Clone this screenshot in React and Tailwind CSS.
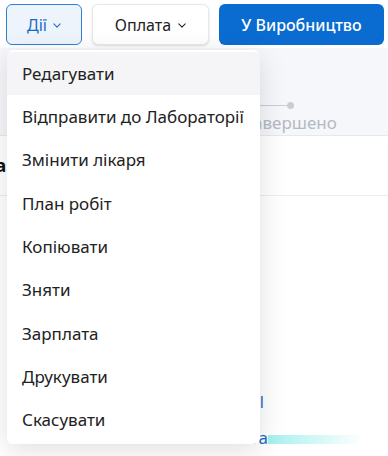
import React from 'react';

const font = { fontFamily: '"Noto Sans", "Liberation Sans", sans-serif' };

const Chevron = ({ className }) => (
  <svg viewBox="0 0 10 6" className={className} fill="none" stroke="currentColor" strokeWidth="1.3" strokeLinecap="round" strokeLinejoin="round">
    <path d="M1 1l4 4 4-4" />
  </svg>
);

const items = [
  'Редагувати',
  'Відправити до Лабораторії',
  'Змінити лікаря',
  'План робіт',
  'Копіювати',
  'Зняти',
  'Зарплата',
  'Друкувати',
  'Скасувати',
];

const App = () => {
  return (
    <div className="relative w-[388px] h-[456px] overflow-hidden bg-white" style={font}>
      {/* toolbar */}
      <div className="flex gap-[10px] pl-[6px] pt-[4px] h-[48px]">
        <button className="flex items-center justify-center gap-[6px] w-[76px] h-[41px] rounded-md border border-[#2f7fd4] bg-[#eef4fc] text-[#1a6bc4] text-[16px]">
          Дії
          <Chevron className="w-[8px] h-[5px] mt-[2px]" />
        </button>
        <button className="flex items-center justify-center gap-[7px] w-[117px] h-[41px] rounded-md border border-[#e6e8ec] bg-white text-[#222] text-[16px] shadow-sm">
          Оплата
          <Chevron className="w-[8px] h-[5px] mt-[2px]" />
        </button>
        <button className="flex items-center justify-center w-[165px] h-[41px] rounded-md bg-[#0a6cd0] text-white text-[16px] font-medium">
          У Виробництво
        </button>
      </div>

      {/* stepper strip */}
      <div className="h-[88px] bg-[#f5f7fb] border-b border-[#e6e8ec] flex justify-end">
        <div className="flex flex-col items-center w-[100px] mr-[48px] pt-[54px]">
          <div className="flex items-center w-full">
            <div className="flex-1 h-[1px] bg-[#c9ced6]" />
            <div className="w-[7px] h-[7px] rounded-full bg-[#c9ced6]" />
            <div className="flex-1" />
          </div>
          <span className="text-[17px] text-[#b4b9c2] leading-[20px] mt-[4px]">Завершено</span>
        </div>
      </div>

      {/* section title */}
      <div className="h-[60px] border-b border-[#eceef1] flex items-center">
        <span className="ml-[-38px] text-[18px] font-bold text-[#111]">Дата</span>
      </div>

      {/* body */}
      <div className="flex flex-col pt-[196px] gap-[16px]">
        <div className="w-[264px] text-right text-[#1a6bc4] text-[16px] leading-[20px]">Пацієнт l</div>
        <div className="flex items-center">
          <div className="w-[268px] text-right text-[#1a6bc4] text-[17px] leading-[20px]">Оплата</div>
          <div className="w-[95px] h-[9px] mt-[2px] bg-gradient-to-r from-[#a6f0ee] to-transparent" />
        </div>
      </div>

      {/* dropdown menu */}
      <div className="absolute left-[7px] top-[50px] w-[253px] rounded-md bg-white py-[2px] shadow-[0_6px_28px_rgba(0,0,0,0.13)]">
        {items.map((label, i) => (
          <div
            key={label}
            className={`h-[43.3px] flex items-center px-[15px] text-[17px] text-[#222] ${i === 0 ? 'bg-[#f5f5f7]' : ''}`}
          >
            {label}
          </div>
        ))}
      </div>
    </div>
  );
};

export default App;
